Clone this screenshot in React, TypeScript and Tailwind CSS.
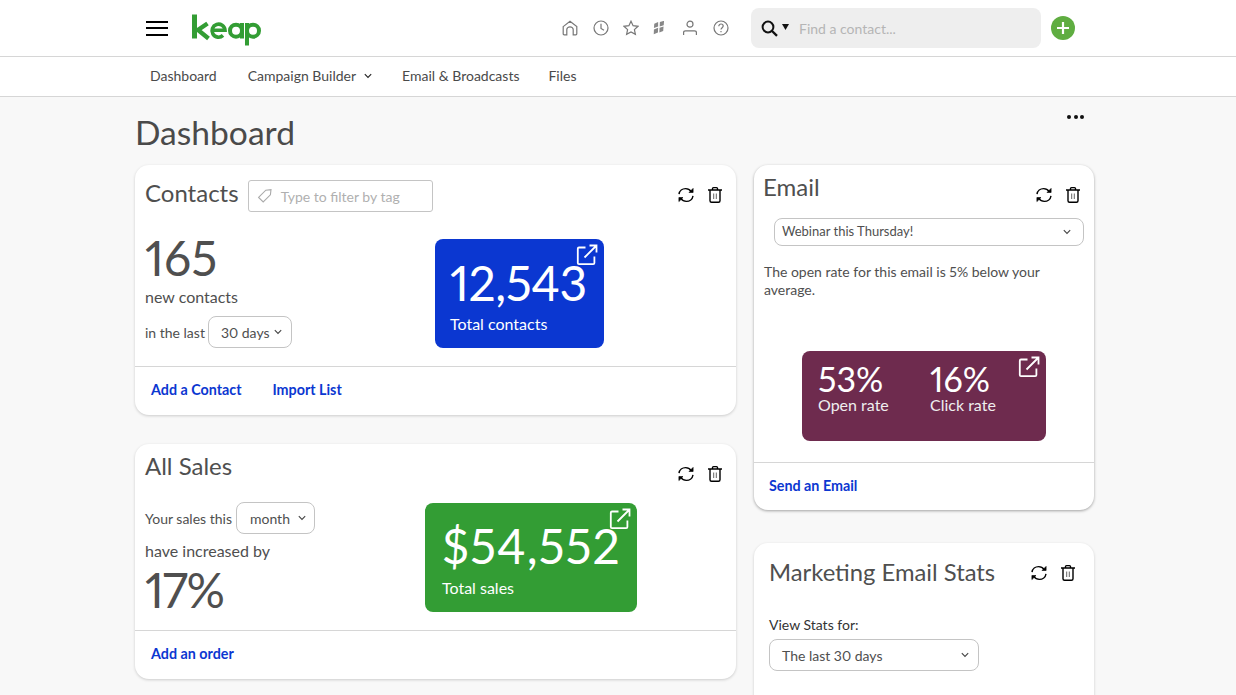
import React from 'react';

const Refresh = () => (
  <svg width="18" height="18" viewBox="0 0 18 18" fill="none" stroke="#000" strokeWidth="1.4">
    <path d="M2 8.2C2.5 4.8 5.4 2.6 8.6 2.6c2.4 0 4.3 1.1 5.6 3" />
    <path d="M16.1 2.4v4.1h-4.1z" fill="#000" strokeWidth="0.6" />
    <path d="M16 9.8c-.5 3.4-3.4 5.6-6.6 5.6-2.4 0-4.3-1.1-5.6-3" />
    <path d="M1.9 15.6v-4.1H6z" fill="#000" strokeWidth="0.6" />
  </svg>
);

const Trash = () => (
  <svg width="16" height="18" viewBox="0 0 16 18" fill="none" stroke="#000" strokeWidth="1.4">
    <path d="M1 4h14M5.5 4V2.6c0-.6.4-1 1-1h3c.6 0 1 .4 1 1V4" />
    <path d="M3 4v10.8c0 .9.6 1.5 1.5 1.5h7c.9 0 1.5-.6 1.5-1.5V4" />
    <path d="M6.7 7.5v5.5M9.3 7.5v5.5" strokeWidth="1" stroke="#666" />
  </svg>
);

const ExternalLink = () => (
  <svg width="22" height="22" viewBox="0 0 22 22" fill="none" stroke="#fff" strokeWidth="1.8">
    <path d="M9.5 3.5H3c-.8 0-1.2.4-1.2 1.2v14.2c0 .8.4 1.2 1.2 1.2h14.2c.8 0 1.2-.4 1.2-1.2v-6.5" />
    <path d="M8.5 13.5 20 2M13.5 1.5h7v7" />
  </svg>
);

const Chevron = ({ color = '#444' }: { color?: string }) => (
  <svg width="8" height="6" viewBox="0 0 8 6" fill="none" stroke={color} strokeWidth="1.1">
    <path d="M.8 1.2 4 4.4l3.2-3.2" />
  </svg>
);

const CardActions = () => (
  <div className="flex items-center gap-[12px]">
    <Refresh />
    <Trash />
  </div>
);

const Select = ({ label, className }: { label: string; className: string }) => (
  <div className={`flex items-center justify-between rounded-[8px] border border-[#c4c4c4] bg-white text-[#4f4f4f] ${className}`}>
    <span>{label}</span>
    <Chevron />
  </div>
);

const navIconClass = 'fill-none stroke-[#777] stroke-[1.2]';

const App: React.FC = () => {
  return (
    <div className="h-[695px] overflow-hidden bg-[#f8f8f8] text-[#4f4f4f] proportional-nums font-['Lato','Liberation_Sans',sans-serif]">
      <header className="h-[57px] bg-white border-b border-[#d6d6d6] flex items-center pl-[146px]">
        <div className="flex flex-col gap-[4.5px] w-[22px]">
          <span className="h-[2px] bg-black" />
          <span className="h-[2px] bg-black" />
          <span className="h-[2px] bg-black" />
        </div>
        <svg className="ml-[24px] mt-[2px]" width="70" height="33" viewBox="0 0 70 33" fill="none" stroke="#339d34" strokeWidth="4">
          <path d="M2.5 1.5v24" strokeWidth="5" />
          <path d="M15.5 10.5 6 17l10.5 8.5" strokeWidth="4.4" />
          <path d="M20.5 17.2H33a6.5 6.5 0 1 0-2 5.2" strokeWidth="3.6" />
          <circle cx="44" cy="17.7" r="6" />
          <path d="M50 10v15.5" />
          <circle cx="61" cy="17.7" r="6" />
          <path d="M55 10v22.5" />
        </svg>
        <div className="ml-[300px] flex items-center">
          <svg width="16" height="16" viewBox="0 0 16 16" className={navIconClass}>
            <path d="M1.2 6.6 8 1.2l6.8 5.4v7.2c0 .7-.4 1-1 1h-2.6V9.6c0-1.6-1.4-2.8-3.2-2.8S4.8 8 4.8 9.6v5.2H2.2c-.6 0-1-.3-1-1z" />
          </svg>
          <svg width="16" height="16" viewBox="0 0 16 16" className={`ml-[15px] ${navIconClass}`}>
            <circle cx="8" cy="8" r="7" />
            <path d="M8 3.8V8.4l3 1.8" />
          </svg>
          <svg width="16" height="16" viewBox="0 0 16 16" className={`ml-[14px] ${navIconClass}`}>
            <path d="m8 1.2 2.1 4.5 4.9.6-3.6 3.3 1 4.8L8 12l-4.4 2.4 1-4.8L1 6.3l4.9-.6z" />
          </svg>
          <svg width="14" height="14" viewBox="0 0 16 16" fill="#888" className="ml-[13px]">
            <path d="M2.6 3 7 1v5.4L2.2 8zM9 1l4.8-1.2-.4 5L8.8 6.2zM2.2 9.6 7 7.8l-.2 5.4-4.8 2zM8.6 7.6l4.6-1.4-.4 5.2-4.4 1.6z" />
          </svg>
          <svg width="16" height="16" viewBox="0 0 16 16" className={`ml-[16px] ${navIconClass}`}>
            <circle cx="8" cy="4.2" r="3" />
            <path d="M1.6 15v-2.4c0-1.2.8-1.8 2-1.8h8.8c1.2 0 2 .6 2 1.8V15" />
          </svg>
          <svg width="16" height="16" viewBox="0 0 16 16" className={`ml-[15px] ${navIconClass}`}>
            <circle cx="8" cy="8" r="7" />
            <path d="M5.8 6.2C5.8 4.8 6.8 4 8 4s2.2.8 2.2 2c0 1.6-2.2 1.8-2.2 3.6" />
            <path d="M8 11v1.2" />
          </svg>
        </div>
        <div className="ml-[22px] w-[290px] h-[40px] rounded-[8px] bg-[#eeeeee] flex items-center pl-[10px]">
          <svg width="17" height="17" viewBox="0 0 17 17" fill="none" stroke="#111" strokeWidth="2">
            <circle cx="7" cy="7" r="5.4" />
            <path d="m11 11 5 4.8" strokeWidth="2.4" />
          </svg>
          <svg className="ml-[4px] mb-[2px]" width="7" height="6" viewBox="0 0 7 6" fill="#111">
            <path d="M0 0h7L3.5 6z" />
          </svg>
          <span className="ml-[10px] text-[14px] text-[#b5b5b5]">Find a contact...</span>
        </div>
        <div className="ml-[10px] w-[24px] h-[24px] rounded-full bg-[#5fad41] flex items-center justify-center">
          <svg width="12" height="12" viewBox="0 0 12 12" stroke="#fff" strokeWidth="2.2">
            <path d="M6 0v12M0 6h12" />
          </svg>
        </div>
      </header>

      <nav className="h-[40px] bg-white border-b border-[#d6d6d6] flex items-center pl-[150px] pb-[2px] text-[14px] text-[#4a4a4a]">
        <span>Dashboard</span>
        <span className="ml-[31px] flex items-center gap-[8px]">
          Campaign Builder <Chevron color="#222" />
        </span>
        <span className="ml-[30px]">{'Email & Broadcasts'}</span>
        <span className="ml-[29px]">Files</span>
      </nav>

      <main className="w-[959px] ml-[135px]">
        <div className="h-[68px] relative pt-[17px]">
          <h1 className="text-[33.6px] leading-[37px] text-[#4a4a4a]">Dashboard</h1>
          <div className="absolute right-[10px] top-[18px] flex gap-[2.5px]">
            <span className="w-[4px] h-[4px] rounded-full bg-[#111]" />
            <span className="w-[4px] h-[4px] rounded-full bg-[#111]" />
            <span className="w-[4px] h-[4px] rounded-full bg-[#111]" />
          </div>
        </div>

        <div className="flex gap-[18px] items-start">
          <div className="w-[601px] flex flex-col gap-[29px]">
            <section className="h-[250px] rounded-[14px] bg-white shadow-[0_1px_3px_rgba(0,0,0,0.18)] flex flex-col">
              <div className="flex items-start pl-[10px] pr-[13px] pt-[13px]">
                <h2 className="text-[24px] leading-[30px] text-[#4f4f4f]">Contacts</h2>
                <div className="ml-[9px] mt-[2px] w-[185px] h-[32px] border border-[#c4c4c4] rounded-[3px] flex items-center pl-[8px]">
                  <svg width="16" height="16" viewBox="0 0 16 16" fill="none" stroke="#aaa" strokeWidth="1.1">
                    <path d="M1.6 9.4 8.8 2.2l5.2-.6-.6 5.2-7.2 7.2z" />
                  </svg>
                  <span className="ml-[8px] text-[14px] text-[#b0b0b0]">Type to filter by tag</span>
                </div>
                <div className="ml-auto mt-[8px]">
                  <CardActions />
                </div>
              </div>
              <div className="flex flex-1 pl-[10px] pt-[27px]">
                <div className="w-[290px] mt-[-6px]">
                  <div className="text-[48px] leading-[50px] text-[#4f4f4f]">165</div>
                  <div className="mt-[4px] text-[16px] leading-[20px]">new contacts</div>
                  <div className="mt-[9px] flex items-center gap-[3px] text-[14px]">
                    <span>in the last</span>
                    <Select label="30 days" className="w-[84px] h-[32px] pl-[12px] pr-[9px]" />
                  </div>
                </div>
                <div className="relative w-[169px] h-[109px] rounded-[8px] bg-[#0b37d1] text-white pl-[15px] pt-[16px]">
                  <div className="text-[48px] leading-[56px] tracking-[-0.01em]">12,543</div>
                  <div className="mt-[3px] text-[16px] leading-[20px]">Total contacts</div>
                  <div className="absolute top-[5px] right-[6px]">
                    <ExternalLink />
                  </div>
                </div>
              </div>
              <div className="h-[49px] border-t border-[#d6d6d6] flex items-center pl-[16px] pb-[2px] gap-[31px] text-[14.3px] font-bold text-[#0b37d1]">
                <span>Add a Contact</span>
                <span>Import List</span>
              </div>
            </section>

            <section className="h-[235px] rounded-[14px] bg-white shadow-[0_1px_3px_rgba(0,0,0,0.18)] flex flex-col">
              <div className="flex items-start pl-[10px] pr-[13px] pt-[7px]">
                <h2 className="text-[24px] leading-[30px] text-[#4f4f4f]">All Sales</h2>
                <div className="ml-auto mt-[14px]">
                  <CardActions />
                </div>
              </div>
              <div className="flex flex-1 pl-[10px] pt-[20px]">
                <div className="w-[280px] mt-[-1px]">
                  <div className="flex items-center gap-[4px] text-[14px]">
                    <span>Your sales this</span>
                    <Select label="month" className="w-[79px] h-[32px] pl-[13px] pr-[8px]" />
                  </div>
                  <div className="mt-[7px] text-[16px] leading-[20px]">have increased by</div>
                  <div className="mt-[4px] text-[48px] leading-[50px] tracking-[-0.03em] text-[#4f4f4f]">17%</div>
                </div>
                <div className="relative w-[212px] h-[109px] rounded-[8px] bg-[#339d34] text-white pl-[17px] pt-[15px]">
                  <div className="text-[48px] leading-[56px] tracking-[0.02em]">$54,552</div>
                  <div className="mt-[4px] text-[16px] leading-[20px]">Total sales</div>
                  <div className="absolute top-[5px] right-[6px]">
                    <ExternalLink />
                  </div>
                </div>
              </div>
              <div className="h-[49px] border-t border-[#d6d6d6] flex items-center pl-[16px] pb-[2px] text-[14.3px] font-bold text-[#0b37d1]">
                <span>Add an order</span>
              </div>
            </section>
          </div>

          <div className="w-[340px] flex flex-col gap-[33px]">
            <section className="h-[345px] rounded-[14px] bg-white shadow-[0_1px_3px_rgba(0,0,0,0.35)] flex flex-col">
              <div className="flex items-start pl-[9px] pr-[13px] pt-[7px]">
                <h2 className="text-[24px] leading-[30px] text-[#4f4f4f]">Email</h2>
                <div className="ml-auto mt-[14px]">
                  <CardActions />
                </div>
              </div>
              <div className="pl-[20px] pr-[10px] mt-[14px]">
                <Select label="Webinar this Thursday!" className="h-[28px] pl-[7px] pr-[12px] text-[13px]" />
              </div>
              <p className="mt-[17px] px-[10px] text-[14px] leading-[18px]">
                The open rate for this email is 5% below your average.
              </p>
              <div className="relative mt-[52px] ml-[48px] w-[244px] h-[90px] rounded-[8px] bg-[#6e2b4e] text-white flex pl-[16px] pt-[10px]">
                <div className="w-[112px]">
                  <div className="text-[34px] leading-[36px]">53%</div>
                  <div className="text-[16px] leading-[16px] text-[#eee]">Open rate</div>
                </div>
                <div>
                  <div className="text-[34px] leading-[36px]">16%</div>
                  <div className="text-[16px] leading-[16px] text-[#eee]">Click rate</div>
                </div>
                <div className="absolute top-[5px] right-[6px]">
                  <ExternalLink />
                </div>
              </div>
              <div className="mt-auto h-[48px] border-t border-[#d6d6d6] flex items-center pl-[15px] pb-[1px] text-[14.3px] font-bold text-[#0b37d1]">
                <span>Send an Email</span>
              </div>
            </section>

            <section className="h-[240px] rounded-[14px] bg-white shadow-[0_1px_3px_rgba(0,0,0,0.18)] pl-[15px] pr-[18px] pt-[14px]">
              <div className="flex items-start justify-between">
                <h2 className="text-[23.8px] leading-[30px] text-[#4f4f4f]">Marketing Email Stats</h2>
                <div className="mt-[7px]">
                  <CardActions />
                </div>
              </div>
              <div className="mt-[29px] text-[14px] leading-[18px] text-[#333]">View Stats for:</div>
              <Select label="The last 30 days" className="mt-[5px] w-[210px] h-[32px] pl-[12px] pr-[9px] text-[14px]" />
            </section>
          </div>
        </div>
      </main>
    </div>
  );
};

export default App;
